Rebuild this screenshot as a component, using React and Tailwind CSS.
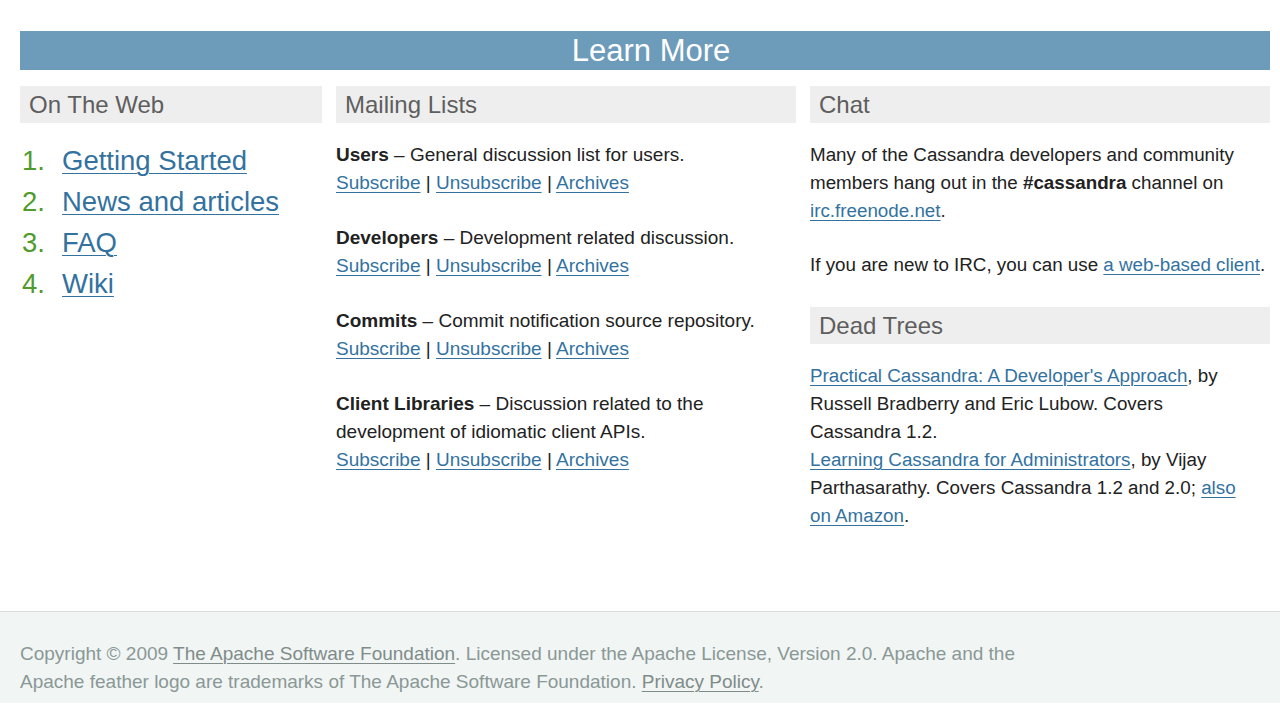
const lists = [
  { name: 'Users', desc: 'General discussion list for users.' },
  { name: 'Developers', desc: 'Development related discussion.' },
  { name: 'Commits', desc: 'Commit notification source repository.' },
  { name: 'Client Libraries', desc: 'Discussion related to the development of idiomatic client APIs.' },
]

const web = ['Getting Started', 'News and articles', 'FAQ', 'Wiki']

function Head({ children, className = '' }) {
  return (
    <h3 className={`h-[37px] bg-[#eeeeee] px-[9px] text-[24px] leading-[37px] text-[#5e5e5e] ${className}`}>
      {children}
    </h3>
  )
}

function A({ children }) {
  return (
    <a href="#" className="text-[#33729f] underline decoration-1 underline-offset-[3px]">
      {children}
    </a>
  )
}

export default function App() {
  return (
    <div className="min-h-[720px] bg-white font-['Liberation_Sans',Arial,sans-serif] text-[#222222]">
      <div className="pl-5 pr-[10px] pt-[31px]">
        <h2 className="h-[39px] bg-[#6d9bba] pl-3 text-center text-[31px] leading-[39px] text-white">Learn More</h2>

        <div className="mt-4 grid grid-cols-[302px_460px_460px] gap-[14px]">
          <div>
            <Head>On The Web</Head>
            <ol className="mt-[17px]">
              {web.map((w, i) => (
                <li key={w} className="flex text-[27.5px] leading-[41px]">
                  <span className="w-[42px] shrink-0 pl-[2px] text-[#4f9b2c]">{i + 1}.</span>
                  <A>{w}</A>
                </li>
              ))}
            </ol>
          </div>

          <div>
            <Head>Mailing Lists</Head>
            <div className="mt-[18px] flex flex-col gap-[27px] text-[19px] leading-[28px]">
              {lists.map((l) => (
                <p key={l.name}>
                  <b className="font-bold">{l.name}</b> – {l.desc}
                  <br />
                  <A>Subscribe</A> | <A>Unsubscribe</A> | <A>Archives</A>
                </p>
              ))}
            </div>
          </div>

          <div className="text-[18.8px] leading-[28px]">
            <Head>Chat</Head>
            <p className="mt-[18px]">
              Many of the Cassandra developers and community members hang out in the{' '}
              <b className="font-bold">#cassandra</b> channel on <A>irc.freenode.net</A>.
            </p>
            <p className="mt-[26px]">
              If you are new to IRC, you can use <A>a web-based client</A>.
            </p>
            <Head className="mt-[28px]">Dead Trees</Head>
            <p className="mt-[18px] pr-3">
              <A>Practical Cassandra: A Developer's Approach</A>, by Russell Bradberry and Eric Lubow. Covers
              Cassandra 1.2.
              <br />
              <A>Learning Cassandra for Administrators</A>, by Vijay Parthasarathy. Covers Cassandra 1.2 and 2.0;{' '}
              <A>also on Amazon</A>.
            </p>
          </div>
        </div>
      </div>

      <footer className="mt-[81px] border-t border-[#d9dedd] bg-[#f1f5f4] px-5 pb-[7px] pt-[28px]">
        <p className="max-w-[1040px] text-[19px] leading-[28px] text-[#8a9896]">
          Copyright © 2009{' '}
          <a href="#" className="text-[#7f8c8a] underline decoration-1 underline-offset-[3px]">
            The Apache Software Foundation
          </a>
          . Licensed under the Apache License, Version 2.0. Apache and the Apache feather logo are trademarks of The
          Apache Software Foundation.{' '}
          <a href="#" className="text-[#7f8c8a] underline decoration-1 underline-offset-[3px]">
            Privacy Policy
          </a>
          .
        </p>
      </footer>
    </div>
  )
}
